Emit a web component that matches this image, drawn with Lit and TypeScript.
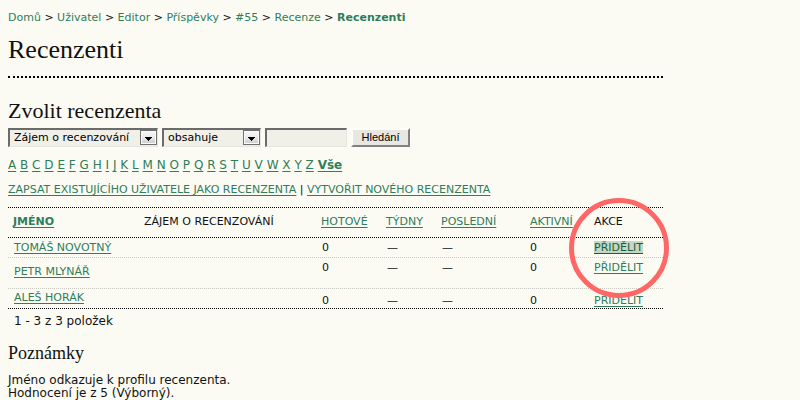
import { LitElement, html, css, svg } from "lit";
import { customElement, property } from "lit/decorators.js";

interface Reviewer {
  name: string;
  done: string;
  weeks: string;
  last: string;
  active: string;
  size: string;
}

const REVIEWERS: Reviewer[] = [
  { name: "Tomáš Novotný", done: "0", weeks: "—", last: "—", active: "0", size: "short" },
  { name: "Petr Mlynář", done: "0", weeks: "—", last: "—", active: "0", size: "tall" },
  { name: "Aleš Horák", done: "0", weeks: "—", last: "—", active: "0", size: "low" },
];

const CRUMBS = ["Domů", "Uživatel", "Editor", "Příspěvky", "#55", "Recenze"];
const LETTERS = "ABCDEFGHIJKLMNOPQRSTUVWXYZ".split("");

const linkStyles = css`
  a {
    color: #2e7d5b;
    text-decoration: underline;
    text-underline-offset: 2px;
  }
`;

@customElement("search-bar")
class SearchBar extends LitElement {
  static styles = css`
    :host {
      display: block;
    }
    .bar {
      display: flex;
      gap: 4px;
      height: 19px;
    }
    .pick {
      position: relative;
      display: flex;
    }
    .field {
      box-sizing: border-box;
      height: 19px;
      margin: 0;
      padding: 0 4px;
      border: solid;
      border-width: 2px 1px 1px 2px;
      border-color: #6b6b6b #e6e6df #e6e6df #6b6b6b;
      border-radius: 0;
      background: #f0efe8;
      color: #000;
      font: 11px/16px "DejaVu Sans", Verdana, sans-serif;
      appearance: none;
    }
    .wide {
      width: 150px;
    }
    .medium {
      width: 99px;
    }
    .term {
      width: 82px;
    }
    .arrow {
      position: absolute;
      right: 1px;
      top: 2px;
      pointer-events: none;
    }
    .go {
      box-sizing: border-box;
      width: 59px;
      height: 19px;
      margin: 0;
      padding: 0;
      border: 2px solid;
      border-color: #fdfdf9 #808080 #808080 #fdfdf9;
      border-radius: 0;
      background: #e8e7e1;
      color: #000;
      font: 11px/15px "Liberation Sans", Arial, sans-serif;
    }
  `;

  private arrow() {
    return html`<svg class="arrow" width="17" height="15" viewBox="0 0 17 15" aria-hidden="true">
      ${svg`<defs><linearGradient id="g" x1="0" y1="0" x2="0" y2="1">
        <stop offset="0" stop-color="#f6f6f6"></stop><stop offset="0.5" stop-color="#e9e9e9"></stop>
        <stop offset="1" stop-color="#cfcfcf"></stop></linearGradient></defs>
      <rect x="0.5" y="0.5" width="16" height="14" fill="#fafafa" stroke="#707070"></rect>
      <rect x="2" y="2" width="13" height="11" fill="url(#g)"></rect>
      <path d="M5 7h7v1h-1v1h-1v1h-1v1h-1v-1h-1v-1h-1v-1h-1z" fill="#000"></path>`}
    </svg>`;
  }

  render() {
    return html`<form class="bar" @submit=${(e: Event) => e.preventDefault()}>
      <span class="pick">
        <select class="field wide" aria-label="Pole">
          <option>Zájem o recenzování</option>
        </select>
        ${this.arrow()}
      </span>
      <span class="pick">
        <select class="field medium" aria-label="Podmínka">
          <option>obsahuje</option>
        </select>
        ${this.arrow()}
      </span>
      <input class="field term" type="text" aria-label="Hledaný výraz" />
      <button class="go" type="submit">Hledání</button>
    </form>`;
  }
}

@customElement("reviewer-table")
class ReviewerTable extends LitElement {
  @property({ attribute: false }) rows: Reviewer[] = [];

  static styles = [
    linkStyles,
    css`
      :host {
        display: block;
        border-top: 1px dotted #000;
      }
      .list {
        width: 100%;
        table-layout: fixed;
        border-collapse: collapse;
      }
      .name {
        width: 131px;
      }
      .interest {
        width: 177px;
      }
      .done {
        width: 65px;
      }
      .active {
        width: 64px;
      }
      .weeks {
        width: 55px;
      }
      .last {
        width: 89px;
      }
      tr {
        background: repeating-linear-gradient(90deg, #000 0 1px, transparent 1px 2px) bottom / 100% 1px no-repeat;
      }
      tr.short,
      tr.tall {
        background-image: repeating-linear-gradient(90deg, #c8c8c0 0 1px, transparent 1px 2px);
      }
      th {
        height: 30px;
        padding: 0 0 2px 5px;
        box-sizing: border-box;
        text-align: left;
        font-weight: normal;
        font-size: 11px;
        line-height: 14px;
        text-transform: uppercase;
      }
      td {
        box-sizing: border-box;
        padding: 3px 0 0 6px;
        line-height: 14px;
        vertical-align: top;
      }
      td a {
        text-transform: uppercase;
      }
      .short td {
        height: 20px;
      }
      .tall td {
        height: 31px;
      }
      .tall .person {
        padding-top: 7px;
      }
      .low td {
        height: 20px;
        padding-top: 5px;
      }
      .low .person {
        padding-top: 2px;
      }
      td.act {
        padding-left: 5px;
      }
      .sorted {
        font-weight: bold;
      }
      .spot {
        position: relative;
        display: inline-block;
        height: 13px;
        line-height: 13px;
      }
      .spot a {
        display: inline-block;
        height: 12px;
        line-height: 13px;
        background: #c3d9c5;
        color: #1c5c3c;
      }
      .ring {
        position: absolute;
        left: 50%;
        top: 50%;
        box-sizing: border-box;
        width: 100px;
        height: 100px;
        margin: -50px 0 0 -50px;
        border: 5px solid #ff6666;
        border-radius: 50%;
        pointer-events: none;
      }
    `,
  ];

  render() {
    return html`<table class="list">
      <thead>
        <tr>
          <th class="name"><a class="sorted" href="#name">Jméno</a></th>
          <th class="interest">Zájem o recenzování</th>
          <th class="done"><a href="#done">Hotové</a></th>
          <th class="weeks"><a href="#weeks">Týdny</a></th>
          <th class="last"><a href="#last">Poslední</a></th>
          <th class="active"><a href="#active">Aktivní</a></th>
          <th>Akce</th>
        </tr>
      </thead>
      <tbody>
        ${this.rows.map(
          (r, i) => html`<tr class=${r.size}>
            <td class="person"><a href="#profile">${r.name}</a></td>
            <td></td>
            <td>${r.done}</td>
            <td>${r.weeks}</td>
            <td>${r.last}</td>
            <td class="act">${r.active}</td>
            <td class="act">
              ${i === 0
                ? html`<span class="spot"><a href="#assign">Přidělit</a><span class="ring"></span></span>`
                : html`<a href="#assign">Přidělit</a>`}
            </td>
          </tr>`
        )}
      </tbody>
    </table>`;
  }
}

@customElement("app-root")
class AppRoot extends LitElement {
  static styles = [
    linkStyles,
    css`
      :host {
        display: block;
        box-sizing: border-box;
        min-height: 100vh;
        padding: 11px 8px 0;
        background: #fcfbf3;
        color: #111;
        font: 11px/13px "DejaVu Sans", Verdana, sans-serif;
      }
      .page {
        max-width: 655px;
      }
      .crumbs a {
        text-decoration: none;
      }
      .current,
      .all {
        font-weight: bold;
      }
      h1,
      h2,
      h3 {
        margin: 0;
        font-family: "Liberation Serif", Georgia, serif;
        font-weight: normal;
      }
      h1 {
        padding: 11px 0;
        border-bottom: 2px dotted #000;
        font-size: 26px;
        line-height: 30px;
      }
      h2 {
        padding: 21px 0 5px;
        font-size: 22px;
        line-height: 24px;
      }
      .letters {
        margin-top: 12px;
        font-size: 12px;
      }
      .actions {
        margin: 11px 0;
      }
      .actions a {
        text-transform: uppercase;
      }
      .count {
        padding: 6px 6px 0;
        font-size: 12px;
      }
      h3 {
        padding: 15px 0 11px;
        font-size: 18px;
        line-height: 20px;
      }
      .note {
        margin: 0;
        font-size: 12px;
      }
    `,
  ];

  render() {
    return html`<main class="page">
      <nav class="crumbs">
        ${CRUMBS.map((c) => html`<a href="#up">${c}</a> &gt; `)}<a class="current" href="#here">Recenzenti</a>
      </nav>
      <h1>Recenzenti</h1>
      <h2>Zvolit recenzenta</h2>
      <search-bar></search-bar>
      <div class="letters">
        ${LETTERS.map((l) => html`<a href="#letter">${l}</a> `)}<a class="all" href="#all">Vše</a>
      </div>
      <div class="actions">
        <a href="#enroll">Zapsat existujícího uživatele jako recenzenta</a> |
        <a href="#create">Vytvořit nového recenzenta</a>
      </div>
      <reviewer-table .rows=${REVIEWERS}></reviewer-table>
      <div class="count">1 - 3 z 3 položek</div>
      <h3>Poznámky</h3>
      <p class="note">Jméno odkazuje k profilu recenzenta.<br />Hodnocení je z 5 (Výborný).</p>
    </main>`;
  }
}
